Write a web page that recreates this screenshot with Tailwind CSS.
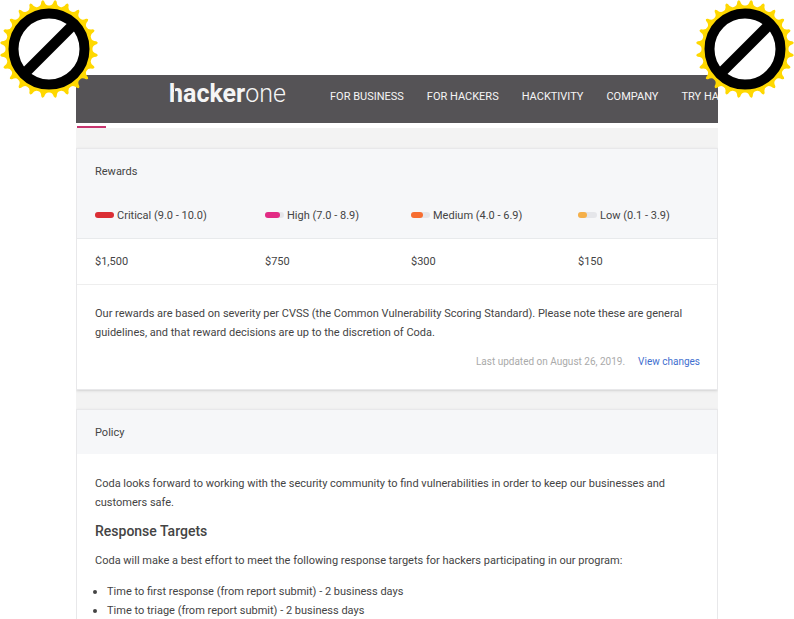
<!DOCTYPE html>
<html lang="en">
<head>
    <meta charset="UTF-8">
    <meta name="viewport" content="width=device-width, initial-scale=1.0">
    <title>Coda - Bug Bounty Program | HackerOne</title>
    <script src="https://cdn.jsdelivr.net/npm/@tailwindcss/browser@4"></script>
</head>
<body class="relative flex h-screen flex-col overflow-hidden bg-white px-[76px] pt-[75px] font-['Roboto',sans-serif] text-[11px] leading-[19px] text-[#444]">
    <div class="flex-1 min-h-0 overflow-hidden bg-[#f3f3f3]">
        <!-- Top navigation -->
        <header class="h-12 overflow-hidden bg-[#555356] text-[#f5f5f5]">
            <nav class="flex items-start whitespace-nowrap pl-[93px]">
                <a href="/" class="relative w-[161px] shrink-0 text-[25px] leading-[38px]">
                    <b>hacker</b><span class="font-light">one</span>
                    <!-- Gap that splits the stem of the h from its arch -->
                    <span class="absolute top-[14px] left-[5px] h-[15px] w-px bg-[#555356]"></span>
                </a>
                <div class="flex gap-[23px] pt-3">
                    <a href="/business">FOR BUSINESS</a>
                    <a href="/hackers">FOR HACKERS</a>
                    <a href="/hacktivity">HACKTIVITY</a>
                    <a href="/company">COMPANY</a>
                    <a href="/try">TRY HACKERONE</a>
                </div>
            </nav>
        </header>
        <div class="h-[5px] bg-white pt-[3px]">
            <div class="ml-px h-[2px] w-[29px] bg-[#c7356f]"></div>
        </div>

        <main class="space-y-[19px] pt-5">
            <!-- Rewards -->
            <section class="border border-[#e8e8ea] bg-white shadow-sm">
                <h2 class="bg-[#f6f7f9] px-[18px] pt-[13px] pb-3">Rewards</h2>
                <table class="w-full table-fixed text-left">
                    <thead class="bg-[#f6f7f9]">
                        <tr class="h-[45px] border-b border-[#e8eaec]">
                            <th class="w-[188px] pl-[18px] font-normal">
                                <div class="flex items-center gap-[3px]">
                                    <span class="h-[6px] w-[19px] rounded-full bg-[#e5e6ea]"><span class="block h-full w-[19px] rounded-full bg-[#db2f35]"></span></span>
                                    Critical (9.0 - 10.0)
                                </div>
                            </th>
                            <th class="w-[146px] font-normal">
                                <div class="flex items-center gap-[3px]">
                                    <span class="h-[6px] w-[19px] rounded-full bg-[#e5e6ea]"><span class="block h-full w-[15px] rounded-full bg-[#e22c85]"></span></span>
                                    High (7.0 - 8.9)
                                </div>
                            </th>
                            <th class="w-[167px] font-normal">
                                <div class="flex items-center gap-[3px]">
                                    <span class="h-[6px] w-[19px] rounded-full bg-[#e5e6ea]"><span class="block h-full w-[12px] rounded-full bg-[#f76e31]"></span></span>
                                    Medium (4.0 - 6.9)
                                </div>
                            </th>
                            <th class="font-normal">
                                <div class="flex items-center gap-[3px]">
                                    <span class="h-[6px] w-[19px] rounded-full bg-[#e5e6ea]"><span class="block h-full w-[9px] rounded-full bg-[#f5b04a]"></span></span>
                                    Low (0.1 - 3.9)
                                </div>
                            </th>
                        </tr>
                    </thead>
                    <tbody>
                        <tr class="h-[46px] border-b border-[#eee]">
                            <td class="pl-[18px]">$1,500</td>
                            <td>$750</td>
                            <td>$300</td>
                            <td>$150</td>
                        </tr>
                    </tbody>
                </table>
                <div class="px-[17px] pt-[19px] pb-[18px]">
                    <p class="pl-px">Our rewards are based on severity per CVSS (the Common Vulnerability Scoring Standard). Please note these are general guidelines, and that reward decisions are up to the discretion of Coda.</p>
                    <div class="mt-[10px] flex justify-end gap-[13px] text-[10px]">
                        <span class="text-[#aaa]">Last updated on August 26, 2019.</span>
                        <a href="/coda/policy_versions" class="text-[#3f6fcf]">View changes</a>
                    </div>
                </div>
            </section>

            <!-- Policy -->
            <section class="border border-[#e8e8ea] bg-white shadow-sm">
                <h2 class="bg-[#f6f7f9] px-[18px] pt-[13px] pb-3">Policy</h2>
                <div class="space-y-[10px] px-[18px] pt-5 pb-[18px]">
                    <p>Coda looks forward to working with the security community to find vulnerabilities in order to keep our businesses and customers safe.</p>
                    <h3 class="text-[14px] font-medium">Response Targets</h3>
                    <p>Coda will make a best effort to meet the following response targets for hackers participating in our program:</p>
                    <ul class="list-disc pt-[2px] pl-3 marker:text-[12px]">
                        <li>Time to first response (from report submit) - 2 business days</li>
                        <li>Time to triage (from report submit) - 2 business days</li>
                    </ul>
                </div>
            </section>
        </main>
    </div>

    <!-- Corner badges -->
    <svg class="absolute top-0 left-0 size-[98px]" viewBox="-49 -49 98 98" aria-hidden="true">
        <path class="teeth" fill="#ffd800"/>
        <circle r="35.5" fill="#fff" stroke="#000" stroke-width="10"/>
        <path d="M-22 22L22 -22" stroke="#000" stroke-width="10.5"/>
    </svg>
    <svg class="absolute top-0 right-0 size-[98px]" viewBox="-49 -49 98 98" aria-hidden="true">
        <path class="teeth" fill="#ffd800"/>
        <circle r="35.5" fill="#fff" stroke="#000" stroke-width="10"/>
        <path d="M-22 22L22 -22" stroke="#000" stroke-width="10.5"/>
    </svg>

    <script>
        // Outline of the gear: 24 teeth with rounded tips
        const point = (radius, degrees) => {
            const a = degrees * Math.PI / 180;
            return `${(radius * Math.cos(a)).toFixed(2)} ${(radius * Math.sin(a)).toFixed(2)}`;
        };

        let outline = `M${point(43.5, 0)}`;
        for (let i = 0; i < 24; i++) {
            const mid = i * 15 + 7.5;
            outline += `Q${point(43.3, mid - 3)} ${point(47.8, mid - 1.8)}`;
            outline += `Q${point(50.5, mid)} ${point(47.8, mid + 1.8)}`;
            outline += `Q${point(43.3, mid + 3)} ${point(43.5, mid + 7.5)}`;
        }
        document.querySelectorAll('.teeth').forEach(path => path.setAttribute('d', outline + 'Z'));
    </script>
</body>
</html>
